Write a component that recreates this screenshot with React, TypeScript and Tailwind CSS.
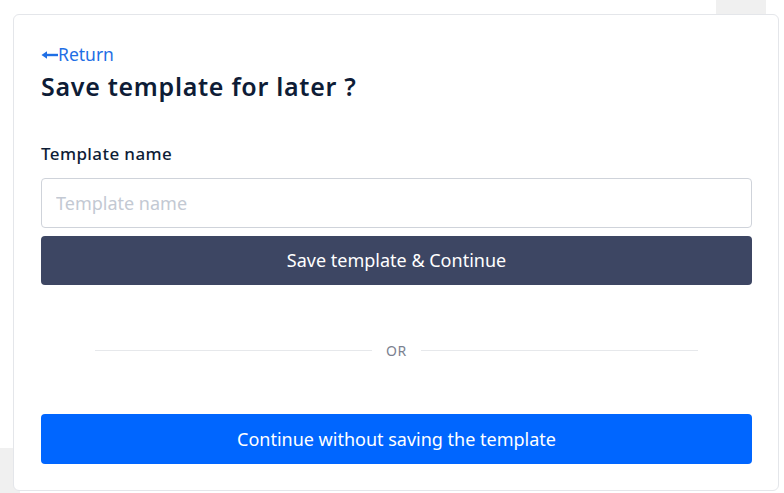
import React from 'react';

export default function App() {
  return (
    <div className="relative h-[493px] w-[784px] overflow-hidden bg-white font-['Noto_Sans',sans-serif]">
      {/* page bits peeking out from behind the dialog */}
      <div className="absolute right-[18px] top-0 h-[20px] w-[50px] bg-[#f0f0f0]" />
      <div className="absolute bottom-0 left-0 h-[45px] w-[20px] bg-[#f0f0f0]" />

      <div className="relative ml-[13px] mt-[14px] flex h-[477px] w-[766px] flex-col rounded-md border border-[#e4e6ea] bg-white pl-[27px] pr-[26px] pt-[27px]">
        <a href="#" className="flex h-[24px] items-center text-[17.5px] leading-[24px] text-[#1f6fe5]">
          <svg width="17" height="10" viewBox="0 0 17 10" className="mt-[1px]">
            <path d="M17 5H4" stroke="#1f6fe5" strokeWidth="2.4" />
            <path d="M0.5 5L6 1.2V8.8Z" fill="#1f6fe5" />
          </svg>
          Return
        </a>
        <h1 className="mt-[4px] text-[25px] font-semibold leading-[32px] tracking-[0.7px] text-[#0e1c36]">
          Save template for later ?
        </h1>

        <label className="mt-[40px] text-[17px] font-medium leading-[24px] tracking-[0.4px] text-[#0e1c36]">
          Template name
        </label>
        <input
          placeholder="Template name"
          className="mt-[12px] h-[50px] w-full rounded-[4px] border border-[#cfd3da] px-[14px] text-[18px] text-[#0e1c36] outline-none placeholder:text-[#c3c9d3]"
        />
        <button className="mt-[8px] h-[49px] w-full rounded-[4px] bg-[#3d4663] text-[18px] text-white">
          Save template &amp; Continue
        </button>

        <div className="mx-[54px] mt-[55px] flex h-[20px] items-center gap-[14px]">
          <div className="h-px flex-1 bg-[#e6e8eb]" />
          <span className="text-[14px] tracking-[0.6px] text-[#7b8190]">OR</span>
          <div className="h-px flex-1 bg-[#e6e8eb]" />
        </div>

        <button className="mt-[54px] h-[50px] w-full rounded-[4px] bg-[#0066ff] text-[18px] text-white">
          Continue without saving the template
        </button>
      </div>
    </div>
  );
}
